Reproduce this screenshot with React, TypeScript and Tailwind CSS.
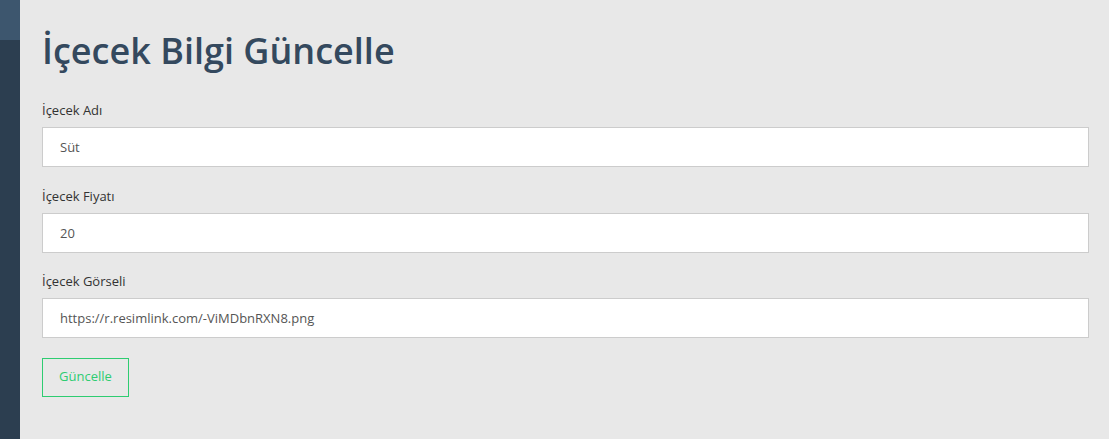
import React from "react";

const fields = [
  { label: "İçecek Adı", value: "Süt" },
  { label: "İçecek Fiyatı", value: "20" },
  { label: "İçecek Görseli", value: "https://r.resimlink.com/-ViMDbnRXN8.png" },
];

export default function App() {
  return (
    <div className="flex h-[439px] w-full overflow-hidden bg-[#e8e8e8] font-['Open_Sans',sans-serif]">
      <aside className="flex w-[20px] shrink-0 flex-col bg-[#2c3e50]">
        <div className="h-[40px] bg-[#3d566e]" />
      </aside>
      <main className="flex-1 pl-[22px] pr-[20px] pt-[31px]">
        <h1 className="mb-[30px] text-[36px] font-semibold leading-[40px] text-[#34495e]">
          İçecek Bilgi Güncelle
        </h1>
        <form onSubmit={(e) => e.preventDefault()}>
          {fields.map((f) => (
            <div key={f.label} className="mb-[19.5px]">
              <label className="mb-2 block text-[13px] leading-[18px] text-[#333]">
                {f.label}
              </label>
              <input
                defaultValue={f.value}
                className="block h-[40px] w-full border border-[#ccc] bg-white px-[17px] text-[13px] text-[#555] outline-none"
              />
            </div>
          ))}
          <button
            type="submit"
            className="h-[39px] w-[87px] border border-[#2ecc71] text-[13px] text-[#2ecc71]"
          >
            Güncelle
          </button>
        </form>
      </main>
    </div>
  );
}
